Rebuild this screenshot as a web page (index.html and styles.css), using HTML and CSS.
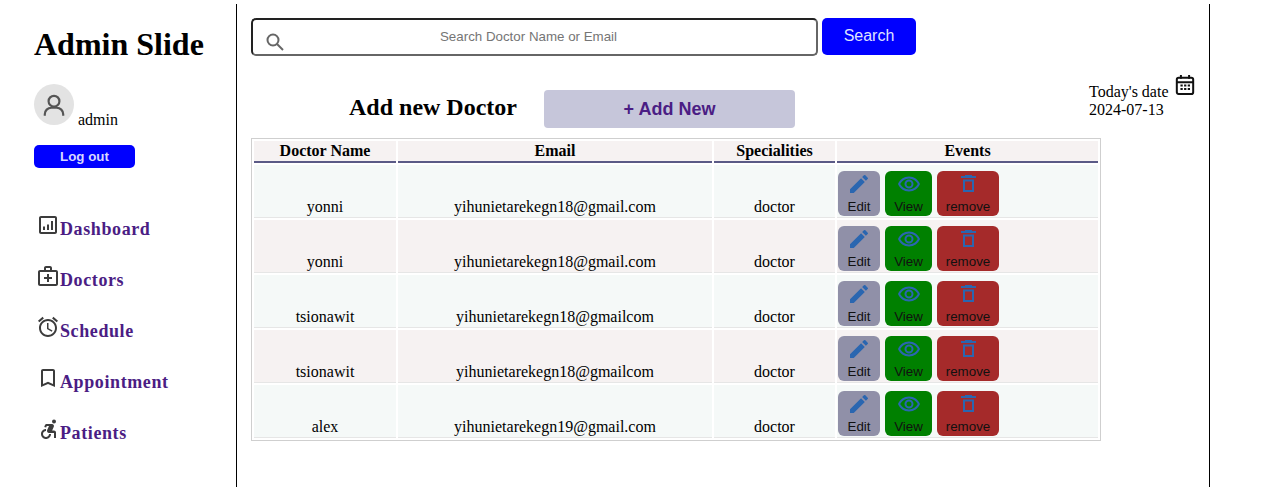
FILE: index.html
```html
<!DOCTYPE html>
<html lang="en">
<head>
<meta charset="utf-8">
<title>Admin Slide</title>
<link rel="stylesheet" href="styles.css">
</head>
<body>
<svg class="defs" width="0" height="0" aria-hidden="true">
  <symbol id="i-edit" viewBox="0 0 24 24"><path d="M3 17.250V21h3.750L17.810 9.940l-3.750-3.750L3 17.250zM20.710 7.040a.996.996 0 0 0 0-1.410l-2.340-2.340a.996.996 0 0 0-1.410 0l-1.830 1.830 3.750 3.750 1.830-1.830z" fill="currentColor"/></symbol>
  <symbol id="i-eye" viewBox="0 0 24 24"><path d="M12 4.500C7 4.500 2.730 7.610 1 12c1.730 4.390 6 7.500 11 7.500s9.270-3.110 11-7.500c-1.730-4.390-6-7.500-11-7.500zm0 13c-3.700 0-7-2.100-8.800-5.500C5 8.600 8.300 6.500 12 6.500s7 2.100 8.800 5.500c-1.800 3.400-5.100 5.500-8.800 5.500zM12 7.500a4.500 4.500 0 1 0 0 9 4.500 4.500 0 0 0 0-9zm0 7a2.500 2.500 0 1 1 0-5 2.500 2.500 0 0 1 0 5z" fill="currentColor" fill-rule="evenodd"/></symbol>
  <symbol id="i-trash" viewBox="0 0 24 24"><path d="M9 3h7v1h4v2H5V4h4V3zM7 7.500h11V20H7V7.500zm2 2V18h7V9.500H9z" fill="currentColor" fill-rule="evenodd"/></symbol>
</svg>
<div class="layout">
  <aside class="sidebar">
    <h1 class="brand">Admin Slide</h1>
    <div class="user">
      <span class="avatar">
        <svg width="26" height="26" viewBox="0 0 24 24" fill="none" stroke="#555" stroke-width="2"><circle cx="12" cy="8.500" r="5"/><path d="M3.500 22v-1.500a6 6 0 0 1 6-6h5a6 6 0 0 1 6 6V22"/></svg>
      </span>
      <span class="user-name">admin</span>
    </div>
    <button class="logout">Log out</button>
    <nav class="nav">
      <a class="nav-item">
        <svg class="nav-icon" viewBox="0 0 24 24"><path d="M19 3H5c-1.100 0-2 .900-2 2v14c0 1.100.900 2 2 2h14c1.100 0 2-.900 2-2V5c0-1.100-.900-2-2-2zm0 16H5V5h14v14z"/><path d="M7 13.500h2V17H7zM11 11.500h2V17h-2zM15 8h2v9h-2z"/></svg>
        <span>Dashboard</span>
      </a>
      <a class="nav-item">
        <svg class="nav-icon" viewBox="0 0 24 24"><path d="M20 6h-4V4c0-1.100-.900-2-2-2h-4c-1.100 0-2 .900-2 2v2H4c-1.100 0-2 .900-2 2v12c0 1.100.900 2 2 2h16c1.100 0 2-.900 2-2V8c0-1.100-.900-2-2-2zM10 4h4v2h-4V4zm10 16H4V8h16v12z"/><path d="M13 10h-2v3H8v2h3v3h2v-3h3v-2h-3z"/></svg>
        <span>Doctors</span>
      </a>
      <a class="nav-item">
        <svg class="nav-icon" viewBox="0 0 24 24"><path d="M22 5.720l-4.600-3.860-1.290 1.530 4.600 3.860L22 5.720zM7.880 3.390L6.600 1.860 2 5.710l1.290 1.530 4.590-3.850zM12.500 8H11v6l4.750 2.850.750-1.230-4-2.370V8zM12 4c-4.970 0-9 4.030-9 9s4.030 9 9 9 9-4.030 9-9-4.030-9-9-9zm0 16c-3.870 0-7-3.130-7-7s3.130-7 7-7 7 3.130 7 7-3.130 7-7 7z"/></svg>
        <span>Schedule</span>
      </a>
      <a class="nav-item">
        <svg class="nav-icon" viewBox="0 0 24 24"><path d="M17 3H7c-1.100 0-1.990.900-1.990 2L5 21l7-3 7 3V5c0-1.100-.900-2-2-2zm0 15l-5-2.180L7 18V5h10v13z"/></svg>
        <span>Appointment</span>
      </a>
      <a class="nav-item">
        <svg class="nav-icon" viewBox="0 0 24 24"><circle cx="18" cy="4.540" r="2"/><path d="M15 17h-2c0 1.650-1.350 3-3 3s-3-1.350-3-3 1.350-3 3-3v-2c-2.760 0-5 2.240-5 5s2.240 5 5 5 5-2.240 5-5zm3-3.500h-1.860l1.670-3.670C18.420 8.500 17.440 7 15.960 7h-5.200c-.810 0-1.540.470-1.870 1.200L8.220 10l1.920.530L10.790 9H13l-1.830 4.100c-.600 1.330.380 2.900 1.820 2.900H18v5h2v-5.500c0-1.100-.900-2-2-2z"/></svg>
        <span>Patients</span>
      </a>
    </nav>
  </aside>
  <main class="main">
    <form class="search">
      <div class="search-box">
        <svg class="search-icon" width="20" height="20" viewBox="0 0 20 20" fill="none" stroke="#666" stroke-width="2"><circle cx="8" cy="8" r="5.500"/><path d="m12 12 6 6"/></svg>
        <span class="search-placeholder">Search Doctor Name or Email</span>
      </div>
      <button class="search-btn" type="button">Search</button>
    </form>
    <div class="heading-row">
      <h2 class="heading">Add new Doctor</h2>
      <button class="add-btn" type="button">+ Add New</button>
      <div class="date">
        <div class="date-text">Today's date<br>2024-07-13</div>
        <svg class="date-icon" width="20" height="22" viewBox="0 0 22 24" fill="none" stroke="#111" stroke-width="2.200"><rect x="2" y="4" width="18" height="18" rx="2"/><path d="M6.500 1v4M15.500 1v4M2 9h18"/><path d="M6 12.500h2.500M10 12.500h2.500M14 12.500h2.500M6 16.500h2.500M10 16.500h2.500M14 16.500h2.500"/></svg>
      </div>
    </div>
    <table class="table">
      <thead>
        <tr><th class="c-name">Doctor Name</th><th class="c-email">Email</th><th class="c-spec">Specialities</th><th class="c-events">Events</th></tr>
      </thead>
      <tbody>
        <tr>
          <td>yonni</td><td>yihunietarekegn18@gmail.com</td><td>doctor</td>
          <td class="actions"><div class="action-row">
            <a class="action edit"><svg width="24" height="24"><use href="#i-edit"/></svg><span>Edit</span></a>
            <a class="action view"><svg width="24" height="24"><use href="#i-eye"/></svg><span>View</span></a>
            <a class="action remove"><svg width="24" height="24"><use href="#i-trash"/></svg><span>remove</span></a>
          </div></td>
        </tr>
        <tr>
          <td>yonni</td><td>yihunietarekegn18@gmail.com</td><td>doctor</td>
          <td class="actions"><div class="action-row">
            <a class="action edit"><svg width="24" height="24"><use href="#i-edit"/></svg><span>Edit</span></a>
            <a class="action view"><svg width="24" height="24"><use href="#i-eye"/></svg><span>View</span></a>
            <a class="action remove"><svg width="24" height="24"><use href="#i-trash"/></svg><span>remove</span></a>
          </div></td>
        </tr>
        <tr>
          <td>tsionawit</td><td>yihunietarekegn18@gmailcom</td><td>doctor</td>
          <td class="actions"><div class="action-row">
            <a class="action edit"><svg width="24" height="24"><use href="#i-edit"/></svg><span>Edit</span></a>
            <a class="action view"><svg width="24" height="24"><use href="#i-eye"/></svg><span>View</span></a>
            <a class="action remove"><svg width="24" height="24"><use href="#i-trash"/></svg><span>remove</span></a>
          </div></td>
        </tr>
        <tr>
          <td>tsionawit</td><td>yihunietarekegn18@gmailcom</td><td>doctor</td>
          <td class="actions"><div class="action-row">
            <a class="action edit"><svg width="24" height="24"><use href="#i-edit"/></svg><span>Edit</span></a>
            <a class="action view"><svg width="24" height="24"><use href="#i-eye"/></svg><span>View</span></a>
            <a class="action remove"><svg width="24" height="24"><use href="#i-trash"/></svg><span>remove</span></a>
          </div></td>
        </tr>
        <tr>
          <td>alex</td><td>yihunietarekegn19@gmail.com</td><td>doctor</td>
          <td class="actions"><div class="action-row">
            <a class="action edit"><svg width="24" height="24"><use href="#i-edit"/></svg><span>Edit</span></a>
            <a class="action view"><svg width="24" height="24"><use href="#i-eye"/></svg><span>View</span></a>
            <a class="action remove"><svg width="24" height="24"><use href="#i-trash"/></svg><span>remove</span></a>
          </div></td>
        </tr>
      </tbody>
    </table>
  </main>
</div>
</body>
</html>
```

FILE: styles.css
```css
* { box-sizing: border-box; }
html, body { margin: 0; padding: 0; background: #fff; }
body {
  font-family: "Liberation Serif", "Times New Roman", serif;
  font-size: 16px;
  color: #000;
  height: 499px;
  overflow: hidden;
  padding-top: 4px;
}
.defs { display: block; height: 0; }
.layout { display: flex; width: 1210px; height: 483px; border-right: 1px solid #000; }
.sidebar { width: 237px; flex: none; border-right: 1px solid #000; padding: 22px 0 0 34px; }
.brand { margin: 0; font-size: 32px; line-height: 37px; font-weight: 700; }
.user { display: flex; align-items: flex-end; margin-top: 21px; height: 42px; }
.avatar { width: 40px; height: 41px; align-self: flex-start; border-radius: 50%; background: #e3e3e3; display: flex; align-items: center; justify-content: center; }
.user-name { margin-left: 4px; margin-bottom: -3px; line-height: 18px; font-size: 16px; }
.logout {
  display: block; width: 101px; height: 23px; margin-top: 19px; padding: 0 0 1px;
  background: #0000ff; color: #d8d8ff; border: 0; border-radius: 5px;
  font: 700 13.333px "Liberation Sans", Arial, sans-serif;
}
.nav { display: flex; flex-direction: column; gap: 26px; margin-top: 45px; }
.nav-item { display: flex; align-items: flex-start; height: 25px; color: #4b1d84; font-weight: 700; font-size: 18px; letter-spacing: .6px; }
.nav-icon { flex: none; margin-left: 2px; width: 24px; height: 24px; fill: #3c3c3c; }
.nav-item span { margin-top: 6px; line-height: 21px; }
.main { flex: 1; min-width: 0; padding: 14px 0 0 14px; }
.search { display: flex; gap: 4px; height: 37px; }
.search-box {
  position: relative; width: 567px; height: 38px;
  border: 2px solid; border-color: #222 #666 #666 #222; border-radius: 5px;
  display: flex; align-items: center; justify-content: center;
}
.search-icon { position: absolute; left: 12px; top: 12px; }
.search-placeholder { font: 13.333px "Liberation Sans", Arial, sans-serif; color: #757575; margin: -2px 12px 0 0; }
.search-btn { width: 94px; height: 37px; background: #0000ff; color: #dfe3ff; border: 0; border-radius: 5px; font: 16px "Liberation Sans", Arial, sans-serif; padding: 0 0 1px; }
.heading-row { position: relative; display: flex; align-items: center; height: 38px; margin-top: 35px; padding-left: 98px; }
.heading { margin: -5px 0 0; font-size: 24px; line-height: 28px; font-weight: 700; width: 195px; flex: none; }
.add-btn { width: 251px; height: 38px; background: #c6c6da; color: #4b1d84; border: 0; border-radius: 4px; font: 700 18px "Liberation Sans", Arial, sans-serif; }
.date { position: absolute; left: 838px; top: -17px; width: 106px; height: 44px; display: flex; align-items: flex-start; }
.date-text { font-size: 16px; line-height: 18px; margin-top: 10px; width: 83px; flex: none; white-space: nowrap; }
.date-icon { flex: none; margin: 1px 0 0 3px; }
.table { width: 850px; margin-top: 10px; border: 1px solid #cfcfcf; border-collapse: separate; border-spacing: 2px; table-layout: fixed; font-size: 16px; }
.c-name { width: 142px; }
.c-email { width: 314px; }
.c-spec { width: 121px; }
th { height: 22px; padding: 0 0 1px; background: #f6f2f2; border-bottom: 2px solid #5a5a86; font-size: 16px; line-height: 18px; font-weight: 700; }
td { height: 53px; padding: 0 0 1px; text-align: center; vertical-align: bottom; line-height: 18px; border-bottom: 1px solid #e6e6e6; }
tbody tr:nth-child(odd) td { background: #f5f9f8; }
tbody tr:nth-child(even) td { background: #f6f2f2; }
.action-row { display: flex; gap: 5px; padding: 0 0 0 1px; }
.action {
  display: flex; flex-direction: column; align-items: center; height: 45px;
  border-radius: 6px; color: #2a66b0; font: 13.333px/16px "Liberation Sans", Arial, sans-serif;
  padding-top: 1px;
}
.action svg { flex: none; height: 24px; }
.action span { color: #111; margin-top: 3px; }
.edit { width: 42px; background: #9090a8; }
.view { width: 47px; background: #008000; }
.remove { width: 62px; background: #a52a2a; }
```
